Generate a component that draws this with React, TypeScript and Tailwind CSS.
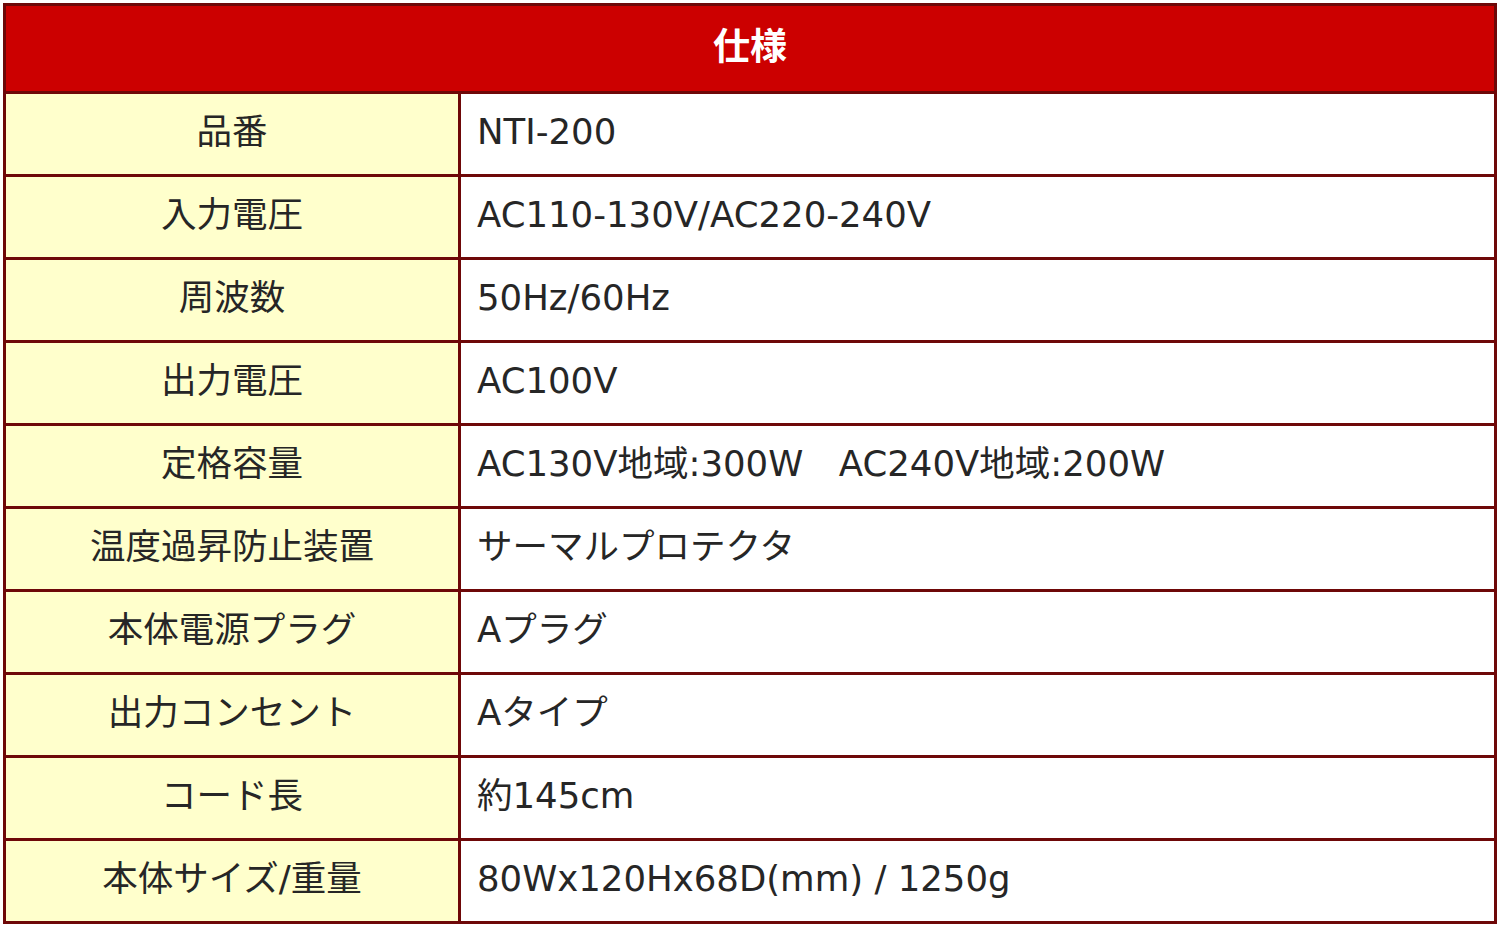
import React from "react";

const rows: [string, string][] = [
  ["品番", "NTI-200"],
  ["入力電圧", "AC110-130V/AC220-240V"],
  ["周波数", "50Hz/60Hz"],
  ["出力電圧", "AC100V"],
  ["定格容量", "AC130V地域:300W\u3000AC240V地域:200W"],
  ["温度過昇防止装置", "サーマルプロテクタ"],
  ["本体電源プラグ", "Aプラグ"],
  ["出力コンセント", "Aタイプ"],
  ["コード長", "約145cm"],
  ["本体サイズ/重量", "80Wx120Hx68D(mm) / 1250g"],
];

export default function App() {
  return (
    <div
      className="w-[1500px] h-[926px] bg-white pt-[3px] pl-[3px]"
      style={{ fontFamily: '"DejaVu Sans", "Noto Sans CJK JP", sans-serif' }}
    >
      <div className="w-[1494px] border-[3px] border-[#6e0808] text-[#262626]">
        <div className="h-[85px] pb-[8px] bg-[#cc0000] flex items-center justify-center text-white font-bold text-[37px] [font-family:'Noto_Sans_CJK_JP',sans-serif]">
          仕様
        </div>
        {rows.map(([k, v]) => (
          <div key={k} className="flex h-[83px] border-t-[3px] border-[#6e0808]">
            <div className="w-[452px] shrink-0 bg-[#ffffcc] flex items-center justify-center pb-[4px] text-[35.5px] leading-none border-r-[3px] border-[#6e0808] box-content">
              {k}
            </div>
            <div className="flex-1 flex items-center pl-[16px] pb-[4px] text-[35.5px] leading-none whitespace-pre">
              {v}
            </div>
          </div>
        ))}
      </div>
    </div>
  );
}
